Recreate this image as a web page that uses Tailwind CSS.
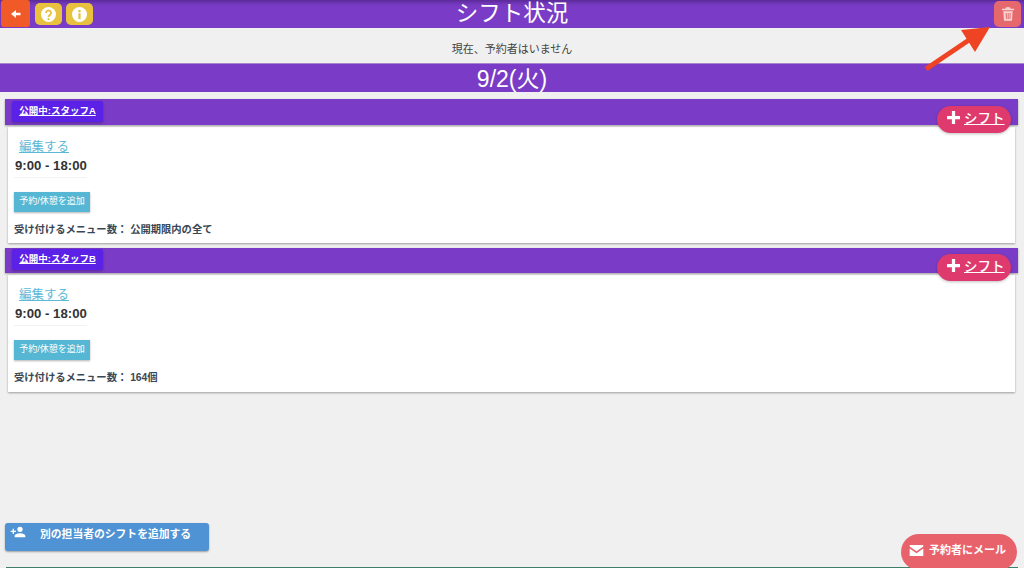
<!DOCTYPE html>
<html lang="ja">
<head>
  <meta charset="UTF-8" />
  <title>シフト状況</title>
  <script src="https://cdn.jsdelivr.net/npm/@tailwindcss/browser@4"></script>
</head>
<body class="bg-[#f0f0f0] font-['Liberation_Sans','Noto_Sans_CJK_JP',sans-serif] text-[#333]">
  <div class="relative h-[568px] w-[1024px] overflow-hidden">

    <!-- Top bar -->
    <header class="relative flex h-[28px] items-start justify-between bg-[#7a3cc6] shadow-[inset_0_4px_4px_-2px_rgba(50,20,90,0.5)]">
      <div class="flex items-start">
        <button class="ml-[1px] flex h-[27px] w-[29px] items-center justify-center rounded-[3px] bg-[#f05a28]">
          <svg class="h-[12px] w-[12px]" viewBox="0 0 24 24" fill="#fff"><path d="M21 9.500H12V4L2 12l10 8v-5.500h9z"/></svg>
        </button>
        <button class="ml-[5px] mt-[3px] flex h-[22px] w-[27px] items-center justify-center rounded-[5px] bg-[#e8c23e]">
          <svg class="h-[15px] w-[15px]" viewBox="0 0 24 24"><circle cx="12" cy="12" r="12" fill="#fff"/><path d="M8 9.500a4 4 0 1 1 6 3.500c-1.400.8-2 1.500-2 3" fill="none" stroke="#e8c23e" stroke-width="3"/><circle cx="12" cy="19.500" r="1.800" fill="#e8c23e"/></svg>
        </button>
        <button class="ml-[4px] mt-[3px] flex h-[22px] w-[27px] items-center justify-center rounded-[5px] bg-[#e8c23e]">
          <svg class="h-[15px] w-[15px]" viewBox="0 0 24 24"><circle cx="12" cy="12" r="12" fill="#fff"/><rect x="10.200" y="10" width="3.600" height="9.500" fill="#e8c23e"/><circle cx="12" cy="6.500" r="2.100" fill="#e8c23e"/></svg>
        </button>
      </div>
      <h1 class="absolute inset-x-0 top-0 text-center text-[22.500px] leading-[27px] text-white">シフト状況</h1>
      <button class="relative mr-[3px] mt-[1px] flex h-[26px] w-[27px] items-center justify-center rounded-[5px] bg-[#e5686c]">
        <svg class="h-[16px] w-[16px]" viewBox="0 0 24 24" fill="#f7d4d2"><path d="M9 2h6l1 2h5v2.500H3V4h5zM5 8h14l-1 14H6zm3.500 2.500.4 9h1.500l-.4-9zm3 0v9H13v-9zm3 0-.4 9h1.500l.4-9z" fill-rule="evenodd"/></svg>
      </button>
    </header>

    <p class="mt-[14px] text-center text-[11px] leading-[14px] text-[#444]">現在、予約者はいません</p>

    <!-- Date -->
    <div class="mt-[7px] h-[29px] border-t border-[#a585d0] bg-[#7a3cc6] text-center text-[23px] leading-[30px] text-white">9/2(火)</div>

    <!-- Staff A -->
    <section class="mt-[7px]">
      <div class="relative mx-[5px] h-[26px] w-[1013px] bg-[#7a3cc6] pl-[7px] pt-[2px] shadow-[0_1px_2px_rgba(0,0,0,0.35)]">
        <a class="flex h-[21px] w-[91px] items-center justify-center rounded-[2px] bg-[#5b21e6] text-[9.500px] font-bold text-white underline shadow-[0_1px_3px_rgba(0,0,0,0.3)]">公開中:スタッフA</a>
        <button class="absolute left-[932px] top-[7px] flex h-[27px] w-[74px] items-center gap-[4px] rounded-full bg-[#de3a6e] pl-[10px] text-[13.500px] font-medium text-white shadow-[0_1px_3px_rgba(0,0,0,0.25)]">
          <svg class="mb-[5px] h-[13px] w-[13px]" viewBox="0 0 12 12" fill="#fff"><path d="M4.500 0h3v4.500H12v3H7.500V12h-3V7.500H0v-3h4.500z"/></svg>
          <span class="underline">シフト</span>
        </button>
      </div>
      <div class="ml-[8px] mt-[2px] h-[116px] w-[1007px] bg-white pl-[6px] shadow-[0_1px_2px_rgba(0,0,0,0.35)]">
        <a class="ml-[5px] block pt-[11px] text-[12.500px] leading-[18px] text-[#5bb8d6] underline">編集する</a>
        <p class="mt-[1px] h-[21px] w-[73px] whitespace-nowrap border-b border-[#f2f2f2] pl-[1px] text-[13.200px] font-bold leading-[18px]">9:00 - 18:00</p>
        <button class="mt-[14px] flex h-[20px] w-[76px] items-center justify-center bg-[#55b7d3] text-[9px] text-white shadow-[0_1px_2px_rgba(0,0,0,0.3)]">予約/休憩を追加</button>
        <p class="mt-[11px] text-[10.300px] font-bold leading-[14px] text-[#3a4754]">受け付けるメニュー数： 公開期限内の全て</p>
      </div>
    </section>

    <!-- Staff B -->
    <section class="mt-[5px]">
      <div class="relative mx-[5px] h-[25px] w-[1013px] bg-[#7a3cc6] pl-[7px] pt-[1px] shadow-[0_1px_2px_rgba(0,0,0,0.35)]">
        <a class="flex h-[21px] w-[91px] items-center justify-center rounded-[2px] bg-[#5b21e6] text-[9.500px] font-bold text-white underline shadow-[0_1px_3px_rgba(0,0,0,0.3)]">公開中:スタッフB</a>
        <button class="absolute left-[932px] top-[6px] flex h-[27px] w-[74px] items-center gap-[4px] rounded-full bg-[#de3a6e] pl-[10px] text-[13.500px] font-medium text-white shadow-[0_1px_3px_rgba(0,0,0,0.25)]">
          <svg class="mb-[5px] h-[13px] w-[13px]" viewBox="0 0 12 12" fill="#fff"><path d="M4.500 0h3v4.500H12v3H7.500V12h-3V7.500H0v-3h4.500z"/></svg>
          <span class="underline">シフト</span>
        </button>
      </div>
      <div class="ml-[8px] mt-[2px] h-[117px] w-[1007px] bg-white pl-[6px] shadow-[0_1px_2px_rgba(0,0,0,0.35)]">
        <a class="ml-[5px] block pt-[11px] text-[12.500px] leading-[18px] text-[#5bb8d6] underline">編集する</a>
        <p class="mt-[1px] h-[21px] w-[73px] whitespace-nowrap border-b border-[#f2f2f2] pl-[1px] text-[13.200px] font-bold leading-[18px]">9:00 - 18:00</p>
        <button class="mt-[14px] flex h-[20px] w-[76px] items-center justify-center bg-[#55b7d3] text-[9px] text-white shadow-[0_1px_2px_rgba(0,0,0,0.3)]">予約/休憩を追加</button>
        <p class="mt-[11px] text-[10.300px] font-bold leading-[14px] text-[#3a4754]">受け付けるメニュー数： 164個</p>
      </div>
    </section>

    <!-- Bottom floating buttons -->
    <button class="absolute left-[5px] top-[523px] flex h-[28px] w-[204px] items-start rounded-[3px] bg-[#4f93d4] pl-[5px] pt-[1px] text-[10.800px] font-bold leading-[18px] text-white shadow-[0_1px_2px_rgba(0,0,0,0.35)]">
      <svg class="h-[16px] w-[16px]" viewBox="0 0 24 24" fill="#fff"><path d="M15 12a4 4 0 1 0 0-8 4 4 0 0 0 0 8zM6 10V7H4v3H1v2h3v3h2v-3h3v-2zm9 4c-2.700 0-8 1.300-8 4v2h16v-2c0-2.700-5.300-4-8-4z"/></svg>
      <span class="ml-[14px] mt-[1px]">別の担当者のシフトを追加する</span>
    </button>
    <div class="absolute bottom-0 left-[6px] h-[1px] w-[1012px] bg-[#3f7f6a]"></div>
    <button class="absolute left-[901px] top-[534px] flex h-[36px] w-[116px] items-center rounded-full bg-[#e8626c] pb-[3px] pl-[8px] text-[11px] font-bold text-white">
      <svg class="h-[15px] w-[15px]" viewBox="1 3 22 18" fill="#fff"><path d="M2 4h20v2l-10 7L2 6zm0 5 10 7 10-7v11H2z"/></svg>
      <span class="ml-[5px]">予約者にメール</span>
    </button>

    <!-- Annotation arrow -->
    <svg class="absolute left-[920px] top-[20px] h-[55px] w-[75px]" viewBox="0 0 75 55">
      <path d="M6 49 49 20" stroke="#ef4423" stroke-width="5" fill="none"/>
      <path d="M70 7 41 10 55 32z" fill="#ef4423"/>
    </svg>
  </div>
</body>
</html>
